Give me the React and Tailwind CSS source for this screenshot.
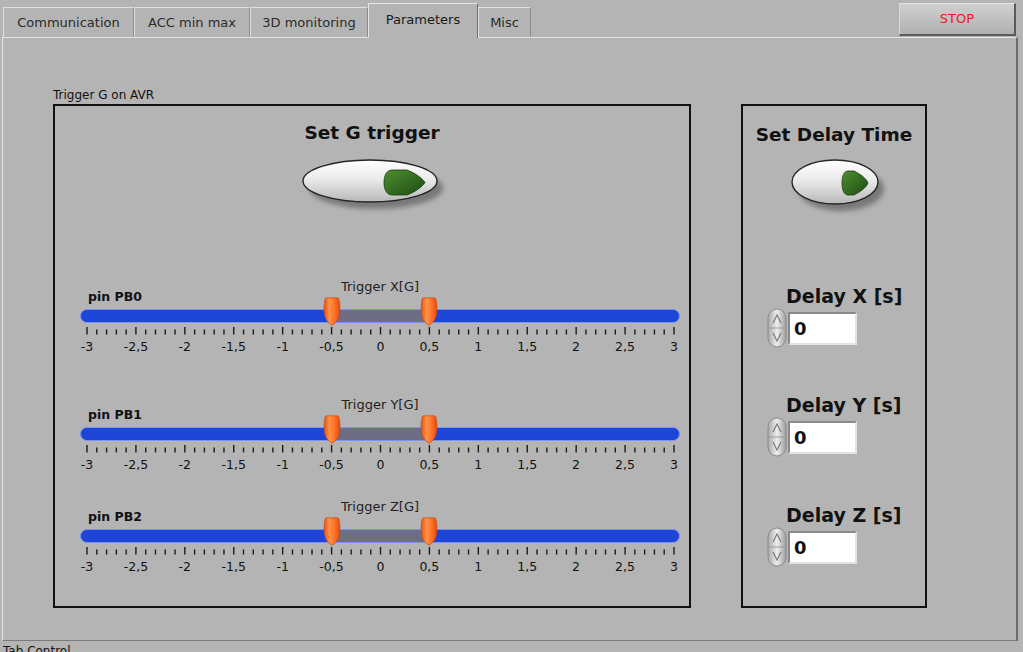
import React from "react";

const SCALE = [-3, -2.5, -2, -1.5, -1, -0.5, 0, 0.5, 1, 1.5, 2, 2.5, 3];
const TICKS = Array.from({ length: 61 }, (_, i) => i);
const fmt = (v) => String(v).replace(".", ",");
const toX = (v) => 7 + ((v + 3) / 6) * 587;

const SLIDERS = [
  { pin: "pin PB0", label: "Trigger X[G]", lo: -0.5, hi: 0.5, gap: "mt-[61px]" },
  { pin: "pin PB1", label: "Trigger Y[G]", lo: -0.5, hi: 0.5, gap: "mt-[43px]" },
  { pin: "pin PB2", label: "Trigger Z[G]", lo: -0.5, hi: 0.5, gap: "mt-[27px]" },
];

const DELAYS = [
  { label: "Delay X [s]", gap: "mt-[67px]" },
  { label: "Delay Y [s]", gap: "mt-[46px]" },
  { label: "Delay Z [s]", gap: "mt-[47px]" },
];

function Thumb({ x }) {
  return (
    <svg
      className="absolute top-[-12px]"
      style={{ left: x - 9 }}
      width="18"
      height="29"
      viewBox="0 0 18 29"
    >
      <defs>
        <linearGradient id="thumbFill" x1="0" y1="0" x2="1" y2="0">
          <stop offset="0" stopColor="#e2521a" />
          <stop offset="0.35" stopColor="#ff9146" />
          <stop offset="0.7" stopColor="#ff6d24" />
          <stop offset="1" stopColor="#dc4c14" />
        </linearGradient>
      </defs>
      <path
        d="M2 2.5 Q2 0.8 4 0.8 L14 0.8 Q16 0.8 16 2.5 Q17.2 8 17 14 Q16.5 24 9 28.5 Q1.5 24 1 14 Q0.8 8 2 2.5 Z"
        fill="url(#thumbFill)"
        stroke="#c4410c"
        strokeWidth="0.6"
      />
    </svg>
  );
}

function RangeSlider({ pin, label, lo, hi, gap }) {
  const a = toX(lo);
  const b = toX(hi);
  return (
    <div className={`ml-[25px] w-[600px] ${gap}`}>
      <div className="grid h-[26px] grid-cols-[1fr_auto_1fr]">
        <span className="self-end pl-[8px] text-[12.5px] font-bold leading-4 text-[#111]">{pin}</span>
        <span className="self-start text-[13px] leading-4 text-[#222]">{label}</span>
        <span />
      </div>
      <div className="relative mt-[4px] h-[14px]">
        <div className="flex h-full overflow-hidden rounded-full border border-[#7b95ea] bg-[#1d45d8]">
          <div style={{ width: a }} />
          <div className="bg-[#6f6d83]" style={{ width: b - a }} />
        </div>
        <Thumb x={a} />
        <Thumb x={b} />
      </div>
      <svg className="mt-[4px] block" width="600" height="8">
        {TICKS.map((i) => {
          const x = 7 + (i * 587) / 60;
          const major = i % 5 === 0;
          return (
            <line
              key={i}
              x1={x}
              x2={x}
              y1={major ? 0 : 2.5}
              y2={7.5}
              stroke="#1a1a1a"
              strokeWidth="1.4"
            />
          );
        })}
      </svg>
      <div className="ml-[7px] mt-[5px] flex w-[587px] justify-between">
        {SCALE.map((v) => (
          <span key={v} className="flex w-0 justify-center whitespace-nowrap text-[12.5px] leading-[14px] text-[#111]">
            {fmt(v)}
          </span>
        ))}
      </div>
    </div>
  );
}

function OkButton({ id, w, cx, cy, rx, ry, arrow, className }) {
  return (
    <svg className={className} width={w} height="60" viewBox={`0 0 ${w} 60`}>
      <defs>
        <linearGradient id={`${id}-body`} x1="0" y1="0" x2="0" y2="1">
          <stop offset="0" stopColor="#ffffff" />
          <stop offset="0.45" stopColor="#ebebeb" />
          <stop offset="1" stopColor="#b8b8b8" />
        </linearGradient>
        <linearGradient id={`${id}-led`} x1="0" y1="0" x2="1" y2="1">
          <stop offset="0" stopColor="#4f8f30" />
          <stop offset="1" stopColor="#1d4a12" />
        </linearGradient>
        <filter id={`${id}-blur`} x="-20%" y="-30%" width="140%" height="160%">
          <feGaussianBlur stdDeviation="2.5" />
        </filter>
      </defs>
      <ellipse cx={cx + 6} cy={cy + 7} rx={rx} ry={ry} fill="#6e6e6e" opacity="0.85" filter={`url(#${id}-blur)`} />
      <ellipse cx={cx} cy={cy} rx={rx} ry={ry} fill={`url(#${id}-body)`} stroke="#262626" strokeWidth="1.4" />
      <path d={arrow} fill={`url(#${id}-led)`} stroke="#1c3d12" strokeWidth="0.8" />
    </svg>
  );
}

function Spinner() {
  return (
    <svg width="20" height="40" viewBox="0 0 20 40">
      <defs>
        <linearGradient id="spin" x1="0" y1="0" x2="1" y2="0">
          <stop offset="0" stopColor="#a8a8a8" />
          <stop offset="0.5" stopColor="#eeeeee" />
          <stop offset="1" stopColor="#9c9c9c" />
        </linearGradient>
      </defs>
      <rect x="1" y="1" width="18" height="38" rx="9" fill="url(#spin)" stroke="#8c8c8c" />
      <line x1="2" y1="20" x2="18" y2="20" stroke="#9a9a9a" />
      <path d="M6 15 L10 7 L14 15" fill="none" stroke="#7a7a7a" strokeWidth="1.2" />
      <path d="M6 25 L10 33 L14 25" fill="none" stroke="#7a7a7a" strokeWidth="1.2" />
    </svg>
  );
}

function DelayControl({ label, gap }) {
  return (
    <div className={`ml-[24px] ${gap}`}>
      <div className="pl-[19px] text-[19px] font-bold leading-[23px] text-[#111]">{label}</div>
      <div className="flex items-center">
        <Spinner />
        <div className="ml-[1px] flex h-[33px] w-[69px] items-center border-2 border-b-[#e2e2e2] border-l-[#8a8a8a] border-r-[#e2e2e2] border-t-[#8a8a8a] bg-white pl-[4px] text-[18px] font-bold text-[#111]">
          0
        </div>
      </div>
    </div>
  );
}

const TABS = [
  { name: "Communication", w: "w-[131px]" },
  { name: "ACC min max", w: "w-[116px]" },
  { name: "3D monitoring", w: "w-[118px]" },
  { name: "Parameters", w: "w-[110px]", active: true },
  { name: "Misc", w: "w-[53px]" },
];

export default function App() {
  return (
    <div className="relative h-[652px] w-[1023px] overflow-hidden bg-[#b4b4b4] font-['DejaVu_Sans',Verdana,sans-serif] text-[#1a1a1a]">
      <div className="flex h-[37px] items-end justify-between">
        <div className="ml-[3px] flex items-end">
          {TABS.map((t) =>
            t.active ? (
              <div
                key={t.name}
                className={`relative z-10 -mb-[1px] flex h-[35px] ${t.w} items-center justify-center border-l border-r border-t border-l-[#e4e4e4] border-r-[#6e6e6e] border-t-[#e4e4e4] bg-[#b4b4b4] pb-[3px] text-[13px] text-[#1a1a1a]`}
              >
                {t.name}
              </div>
            ) : (
              <div
                key={t.name}
                className={`flex h-[30px] ${t.w} items-center justify-center border-l border-r border-t border-l-[#e0e0e0] border-r-[#8c8c8c] border-t-[#e0e0e0] pt-[1px] text-[13px] text-[#2a2a2a]`}
              >
                {t.name}
              </div>
            )
          )}
        </div>
        <button className="mr-[7px] mt-[3px] flex h-[33px] w-[117px] items-center justify-center self-start border border-b-2 border-r-2 border-b-[#5a5a5a] border-l-[#d8d8d8] border-r-[#5a5a5a] border-t-[#e0e0e0] bg-gradient-to-b from-[#d0d0d0] to-[#b0b0b0] text-[13px] text-[#f01818]">
          STOP
        </button>
      </div>

      <div className="relative ml-[2px] h-[604px] w-[1016px] border-b border-l border-r-2 border-t border-b-[#7a7a7a] border-l-[#e4e4e4] border-r-[#6a6a6a] border-t-[#e4e4e4]">
        <div className="ml-[50px] mt-[50px] flex items-end">
          <div className="flex flex-col">
            <div className="text-[12px] leading-[15px] text-[#111]">Trigger G on AVR</div>
            <div className="mt-[1px] flex h-[504px] w-[638px] flex-col border-2 border-[#111]">
              <div className="mt-[15px] text-center text-[18.5px] font-bold leading-[23px] text-[#111]">
                Set G trigger
              </div>
              <OkButton
                id="gbtn"
                className="ml-[246px] mt-[14px] block"
                w={150}
                cx={69}
                cy={23}
                rx={67}
                ry={21}
                arrow="M91 12 L106 12 C114 15 121 20 124 24.5 C121 29 114 34 106 37 L91 37 C86 37 83 32 83 24.5 C83 17 86 12 91 12 Z"
              />
              {SLIDERS.map((s) => (
                <RangeSlider key={s.pin} {...s} />
              ))}
            </div>
          </div>

          <div className="ml-[50px] flex h-[504px] w-[186px] flex-col border-2 border-[#111]">
            <div className="mt-[17px] text-center text-[18.5px] font-bold leading-[23px] text-[#111]">
              Set Delay Time
            </div>
            <OkButton
              id="dbtn"
              className="ml-[47px] mt-[12px] block"
              w={100}
              cx={45}
              cy={24}
              rx={43}
              ry={22}
              arrow="M58 13 L64 13 C70 16 76 20 78 25 C76 30 70 34 64 37 L58 37 C54 37 52 32 52 25 C52 18 54 13 58 13 Z"
            />
            {DELAYS.map((d) => (
              <DelayControl key={d.label} {...d} />
            ))}
          </div>
        </div>
      </div>

      <div className="ml-[3px] mt-[3px] text-[12px] leading-[15px] text-[#111]">Tab Control</div>
    </div>
  );
}
